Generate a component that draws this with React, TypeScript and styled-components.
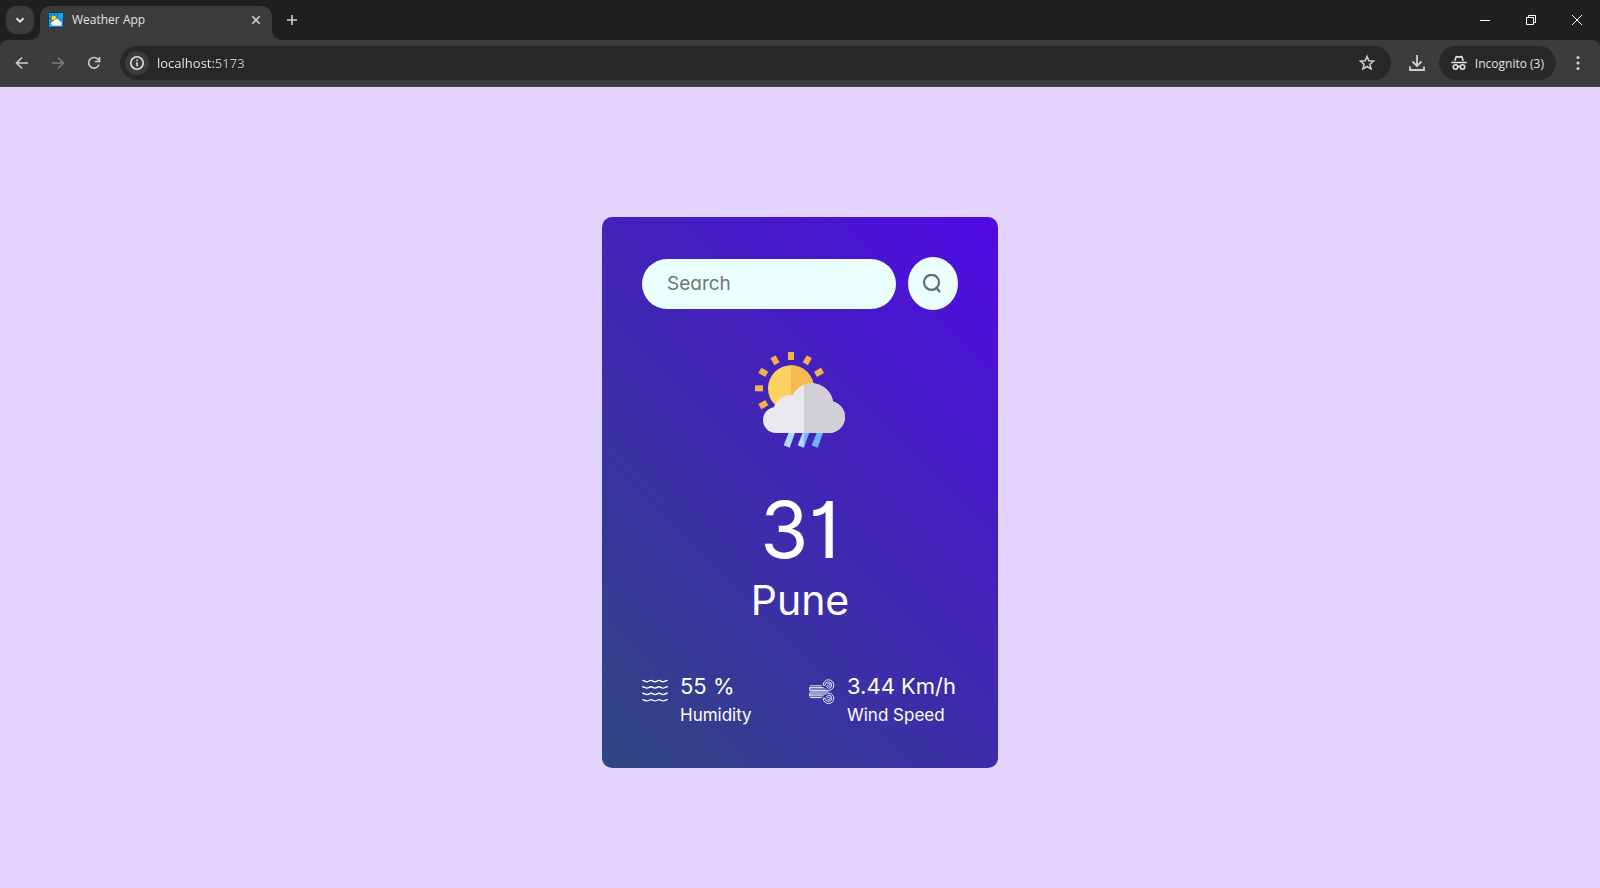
import React from "react";
import styled, { createGlobalStyle } from "styled-components";

const GlobalStyle = createGlobalStyle`
  *, *::before, *::after { box-sizing: border-box; }
  body {
    margin: 0;
    background: #e2d4ff;
    font-family: Inter, "Open Sans", sans-serif;
  }
  button, input { font: inherit; border: 0; padding: 0; }
  button { cursor: pointer; }
`;

/* ---------- browser frame ---------- */

const Window = styled.div`
  display: flex;
  flex-direction: column;
  min-height: 100vh;
`;

const Chrome = styled.header`
  font-family: "Open Sans", "Noto Sans", sans-serif;
  font-size: 12px;
  color: #e3e3e3;
  background: #1f2120;
`;

const TabStrip = styled.div`
  display: flex;
  align-items: flex-start;
  height: 40px;
  padding: 6px 0 0 6px;
`;

const TabSearch = styled.button`
  display: grid;
  place-items: center;
  width: 28px;
  height: 28px;
  border-radius: 10px;
  background: #3c3c3c;
  color: #e3e3e3;
`;

const Tab = styled.div`
  position: relative;
  display: flex;
  align-items: center;
  gap: 8px;
  width: 232px;
  height: 34px;
  margin-left: 6px;
  padding: 0 6px 6px 8px;
  border-radius: 10px 10px 0 0;
  background: #3c3c3c;

  &::before,
  &::after {
    content: "";
    position: absolute;
    bottom: 0;
    width: 10px;
    height: 10px;
  }
  &::before {
    right: 100%;
    background: radial-gradient(circle at 0 0, transparent 10px, #3c3c3c 10px);
  }
  &::after {
    left: 100%;
    background: radial-gradient(circle at 100% 0, transparent 10px, #3c3c3c 10px);
  }
`;

const TabTitle = styled.span`
  flex: 1;
  line-height: 16px;
`;

const PlainButton = styled.button<{ $w?: number; $dim?: boolean }>`
  display: grid;
  place-items: center;
  width: ${(p) => p.$w ?? 20}px;
  height: 28px;
  background: none;
  color: ${(p) => (p.$dim ? "#7d7d7d" : "#cfcfcf")};
`;

const NewTab = styled(PlainButton)`
  margin-left: 6px;
`;

const WindowControls = styled.div`
  display: flex;
  margin-left: auto;
`;

const Toolbar = styled.div`
  display: flex;
  align-items: center;
  height: 47px;
  padding: 0 6px 0 4px;
  border-radius: 8px 8px 0 0;
  border-bottom: 1px solid #4a4a4a;
  background: #3c3c3c;
`;

const AddressBar = styled.form`
  display: flex;
  flex: 1;
  align-items: center;
  height: 34px;
  margin: 0 12px 0 8px;
  padding: 0 14px 0 5px;
  border-radius: 17px;
  background: #282828;
`;

const SiteInfo = styled.button`
  display: grid;
  place-items: center;
  width: 24px;
  height: 24px;
  border-radius: 50%;
  background: #3c3c3c;
  color: #e3e3e3;
`;

const Address = styled.input`
  flex: 1;
  min-width: 0;
  height: 24px;
  margin-left: 8px;
  font-size: 13px;
  outline: 0;
  color: transparent;
  caret-color: #fff;
  background: linear-gradient(90deg, #f4f4f4 57px, #c4c4c4 57px);
  background-clip: text;
  -webkit-background-clip: text;
`;

const Incognito = styled.button`
  display: flex;
  align-items: center;
  gap: 8px;
  height: 34px;
  margin: 0 6px 0 8px;
  padding: 0 12px;
  border-radius: 17px;
  background: #282828;
  color: #e3e3e3;
`;

/* ---------- weather page ---------- */

const Page = styled.main`
  flex: 1;
  display: grid;
  place-items: center;
  padding-top: 10px;
`;

const Card = styled.section`
  display: flex;
  flex-direction: column;
  align-items: center;
  width: 396px;
  padding: 40px;
  border-radius: 10px;
  color: #fff;
  background: linear-gradient(45deg, #2f4680, #500ae4);
  font-feature-settings: "cv11", "cv01";
`;

const SearchBar = styled.form`
  display: flex;
  align-items: center;
  gap: 12px;
  width: 100%;
`;

const SearchInput = styled.input`
  flex: 1;
  min-width: 0;
  height: 50px;
  padding-left: 25px;
  border-radius: 40px;
  outline: 0;
  color: #626262;
  background: #ebfffc;
  font-size: 19px;
  font-feature-settings: "cv11";

  &::placeholder { color: #757575; opacity: 1; }
`;

const SearchButton = styled.button`
  display: grid;
  place-items: center;
  width: 50px;
  height: 53px;
  border-radius: 50%;
  background: #ebfffc;
`;

const WeatherIcon = styled.svg`
  width: 120px;
  height: 120px;
  margin: 30px 0 31px;
`;

const Temperature = styled.p`
  margin: 0;
  font-size: 78px;
  line-height: 78px;
`;

const Location = styled.h1`
  margin: 0;
  font-size: 41px;
  font-weight: 400;
  line-height: 62px;
`;

const Details = styled.div`
  display: flex;
  justify-content: space-between;
  width: 100%;
  margin-top: 39px;
`;

const Detail = styled.div`
  display: flex;
  align-items: flex-start;
  gap: 12px;

  svg { margin-top: 9px; }
`;

const Reading = styled.div`
  min-width: 111px;
`;

const Value = styled.p`
  margin: 0;
  font-size: 22px;
  line-height: 33px;
`;

const Caption = styled.p`
  margin: 0;
  font-size: 17px;
  line-height: 25px;
`;

const line = { fill: "none", stroke: "currentColor" } as const;

const RAYS = [
  [153, 48, 0],
  [202, 61, 30],
  [237, 97, 60],
  [105, 61, -30],
  [70, 97, -60],
  [57, 145, -90],
  [70, 194, -120],
];

function RainyCloud() {
  return (
    <WeatherIcon viewBox="0 0 360 360" role="img" aria-label="Sunny with rain">
      <defs>
        <clipPath id="right-cloud"><rect x="192" y="100" width="140" height="200" /></clipPath>
        <clipPath id="right-sun"><rect x="153" y="60" width="100" height="180" /></clipPath>
        <g id="cloud">
          <circle cx="108" cy="240" r="39" />
          <circle cx="153" cy="219" r="54" />
          <circle cx="215" cy="195" r="65" />
          <circle cx="267" cy="231" r="48" />
          <rect x="108" y="220" width="159" height="59" />
        </g>
      </defs>
      {RAYS.map(([x, y, a]) => (
        <rect key={a} x={x - 9} y={y - 12} width="18" height="24" fill="#f3b247" transform={`rotate(${a} ${x} ${y})`} />
      ))}
      <circle cx="153" cy="145" r="69" fill="#fbd15f" />
      <circle cx="153" cy="145" r="69" fill="#f5b94f" clipPath="url(#right-sun)" />
      <path d="M147 276h19l-17 47-18-7z" fill="#b2d6fd" />
      <path d="M189 276h19l-17 47-18-7z" fill="#b2d6fd" />
      <path d="M193 276h15l-17 47z" fill="#6fb3fc" />
      <path d="M231 276h19l-17 47-18-7z" fill="#6fb3fc" />
      <use href="#cloud" fill="#eae9ef" />
      <use href="#cloud" fill="#d1d0d6" clipPath="url(#right-cloud)" />
    </WeatherIcon>
  );
}

function HumidityIcon() {
  return (
    <svg width="26" height="26" viewBox="0 0 26 26" {...line} strokeWidth="1.4" strokeLinecap="round" aria-hidden="true">
      {[2, 8.4, 14.8, 21.2].map((y) => (
        <path key={y} d={`M.8 ${y - 0.6}C2.8 ${y - 0.4} 3 ${y + 0.7} 5 ${y + 0.7}S7.2 ${y - 0.6} 9 ${y - 0.6}S11.2 ${y + 0.7} 13 ${y + 0.7}S15.2 ${y - 0.6} 17 ${y - 0.6}S19.2 ${y + 0.7} 21 ${y + 0.7}S23.2 ${y - 0.4} 25.2 ${y - 0.6}`} />
      ))}
    </svg>
  );
}

function WindIcon() {
  return (
    <svg width="26" height="26" viewBox="0 0 26 26" {...line} strokeWidth=".9" strokeLinecap="round" aria-hidden="true">
      <defs>
        <g id="gust">
          <path d="M1.500 6.800H12.500" />
          <path d="M.8 8.600H14.200M.8 8.600V11.400H19.500A5.300 5.300 0 1 0 14.200 6.100H16.300A3.200 3.200 0 1 1 19.500 9.300A2.800 2.800 0 0 1 17.500 7.500" />
          <path d="M18.500 6.500a1.400 1.400 0 1 0 .3-1.600" />
          <path d="M1 10H16.500" strokeWidth=".6" />
        </g>
      </defs>
      <use href="#gust" />
      <use href="#gust" transform="matrix(1 0 0 -1 0 25.400)" />
      <path d="M1 12.700H19" strokeWidth=".6" />
    </svg>
  );
}

export default function App() {
  const stop = (e: React.FormEvent) => e.preventDefault();
  return (
    <Window>
      <GlobalStyle />
      <Chrome>
        <TabStrip>
          <TabSearch aria-label="Search tabs">
            <svg width="12" height="12" viewBox="0 0 12 12" {...line} strokeWidth="2"><path d="M2.500 4.200 6 7.700l3.500-3.500" /></svg>
          </TabSearch>
          <Tab>
            <svg width="16" height="16" viewBox="0 0 16 16" aria-hidden="true">
              <rect x=".5" y=".5" width="15" height="15" rx="1" fill="#08a5f4" stroke="#173754" />
              <path d="M2 2l1.500 1.500M6 1v1.500M10 2L8.800 3.400M1 6.500h1.500M2 11l1.400-1.400" stroke="#134a73" />
              <circle cx="6" cy="6.200" r="2.900" fill="#ffd91c" stroke="#30331d" strokeWidth=".5" />
              <path d="M5 14a2.500 2.500 0 0 1 .2-5 3.600 3.600 0 0 1 6.700-.2A2.700 2.700 0 0 1 12.500 14z" fill="#fff" stroke="#26323c" strokeWidth=".5" />
            </svg>
            <TabTitle>Weather App</TabTitle>
            <PlainButton aria-label="Close tab">
              <svg width="10" height="10" viewBox="0 0 10 10" {...line} strokeWidth="1.600"><path d="M1.300 1.300l7.400 7.400M8.700 1.300L1.300 8.700" /></svg>
            </PlainButton>
          </Tab>
          <NewTab $w={28} aria-label="New tab">
            <svg width="12" height="12" viewBox="0 0 12 12" {...line} strokeWidth="1.600"><path d="M6 1v10M1 6h10" /></svg>
          </NewTab>
          <WindowControls>
            <PlainButton $w={46} aria-label="Minimize">
              <svg width="10" height="10" viewBox="0 0 10 10" {...line} stroke="#fff"><path d="M0 5.500h10" /></svg>
            </PlainButton>
            <PlainButton $w={46} aria-label="Restore">
              <svg width="10" height="10" viewBox="0 0 10 10" {...line} stroke="#fff"><path d="M.5 2.500h7v7h-7zM2.500 2.500v-2h7v7h-2" /></svg>
            </PlainButton>
            <PlainButton $w={46} aria-label="Close window">
              <svg width="10" height="10" viewBox="0 0 10 10" {...line} stroke="#fff"><path d="M0 0l10 10M10 0L0 10" /></svg>
            </PlainButton>
          </WindowControls>
        </TabStrip>
        <Toolbar>
          <PlainButton $w={36} aria-label="Back">
            <svg width="14" height="14" viewBox="0 0 14 14" {...line} strokeWidth="1.600"><path d="M13 7H2M7 1.500L1.500 7 7 12.500" /></svg>
          </PlainButton>
          <PlainButton $w={36} $dim aria-label="Forward">
            <svg width="14" height="14" viewBox="0 0 14 14" {...line} strokeWidth="1.600"><path d="M1 7h11M7 1.500L12.500 7 7 12.500" /></svg>
          </PlainButton>
          <PlainButton $w={36} aria-label="Reload">
            <svg width="14" height="14" viewBox="0 0 14 14" {...line} strokeWidth="1.600"><path d="M12 8.500A5.300 5.300 0 1 1 10.900 3.300L12.300 4.800M12.500 1v4.500H8" /></svg>
          </PlainButton>
          <AddressBar onSubmit={stop}>
            <SiteInfo type="button" aria-label="Site information">
              <svg width="16" height="16" viewBox="0 0 16 16" {...line} strokeWidth="1.600"><circle cx="8" cy="8" r="6.200" /><path d="M8 7.200v4M8 4.500v1.600" /></svg>
            </SiteInfo>
            <Address aria-label="Address" defaultValue="localhost:5173" />
            <PlainButton type="button" aria-label="Bookmark this page">
              <svg width="18" height="18" viewBox="0 0 18 18" {...line} strokeWidth="1.500"><path d="M9 2.400l1.800 4.400 4.800.4-3.700 3.100 1.200 4.700L9 12.500 4.900 15l1.200-4.700-3.700-3.100 4.800-.4z" /></svg>
            </PlainButton>
          </AddressBar>
          <PlainButton $w={28} aria-label="Downloads">
            <svg width="18" height="18" viewBox="0 0 18 18" {...line} strokeWidth="1.800"><path d="M9 1v10.500M4.500 7.500L9 12l4.500-4.500M2 12.500v3.500h14v-3.500" /></svg>
          </PlainButton>
          <Incognito>
            <svg width="16" height="16" viewBox="0 0 16 16" aria-hidden="true">
              <path d="M.3 6.800h15.400v1.500H.3zM3 5.800L4.500 1.200Q4.800.5 5.500.7L8 1.300l2.500-.6q.7-.2 1 .5L13 5.800h-1.700L10.300 2.400 8 3l-2.300-.6L4.700 5.800z" fill="currentColor" />
              <g {...line} strokeWidth="1.600"><circle cx="4.500" cy="12" r="2.200" /><circle cx="11.500" cy="12" r="2.200" /><path d="M6.500 11.500h3" /></g>
            </svg>
            Incognito (3)
          </Incognito>
          <PlainButton $w={32} aria-label="Menu">
            <svg width="4" height="16" viewBox="0 0 4 16" fill="currentColor"><circle cx="2" cy="2.500" r="1.600" /><circle cx="2" cy="8" r="1.600" /><circle cx="2" cy="13.500" r="1.600" /></svg>
          </PlainButton>
        </Toolbar>
      </Chrome>
      <Page>
        <Card>
          <SearchBar onSubmit={stop}>
            <SearchInput type="text" placeholder="Search" aria-label="Search city" />
            <SearchButton aria-label="Search">
              <svg width="20" height="20" viewBox="0 0 20 20" fill="none" stroke="#666b6a" strokeWidth="2.200" strokeLinecap="round">
                <circle cx="8.500" cy="8.300" r="7.500" /><path d="M13.800 14.300l2.700 3.200" />
              </svg>
            </SearchButton>
          </SearchBar>
          <RainyCloud />
          <Temperature>31</Temperature>
          <Location>Pune</Location>
          <Details>
            <Detail>
              <HumidityIcon />
              <Reading><Value>55 %</Value><Caption>Humidity</Caption></Reading>
            </Detail>
            <Detail>
              <WindIcon />
              <Reading><Value>3.44 Km/h</Value><Caption>Wind Speed</Caption></Reading>
            </Detail>
          </Details>
        </Card>
      </Page>
    </Window>
  );
}
